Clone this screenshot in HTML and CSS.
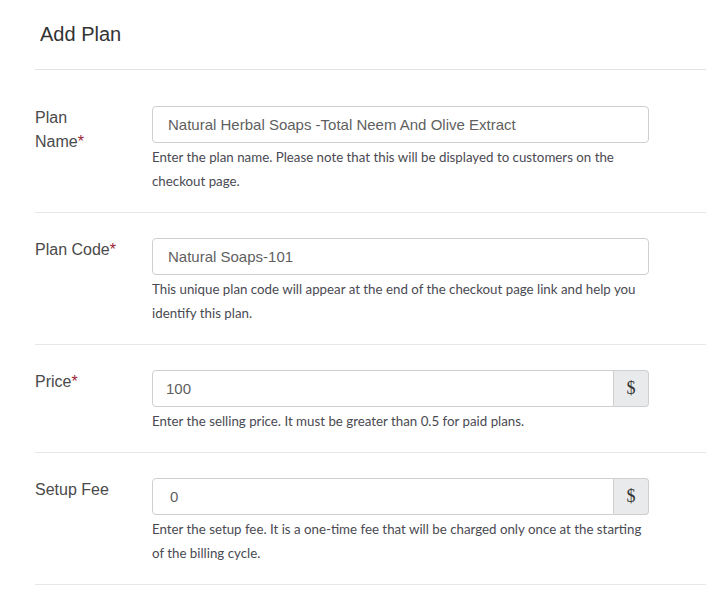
FILE: index.html
```html
<!DOCTYPE html>
<html>
<head>
<meta charset="utf-8">
<link rel="stylesheet" href="styles.css">
</head>
<body>
<div class="panel">
  <div class="header"><h1 class="title">Add Plan</h1></div>
  <div class="row row-first">
    <label class="label">Plan Name<span class="req">*</span></label>
    <div class="field">
      <div class="input"><span class="value">Natural Herbal Soaps -Total Neem And Olive Extract</span></div>
      <p class="help">Enter the plan name. Please note that this will be displayed to customers on the checkout page.</p>
    </div>
  </div>
  <div class="row">
    <label class="label">Plan Code<span class="req">*</span></label>
    <div class="field">
      <div class="input"><span class="value">Natural Soaps-101</span></div>
      <p class="help">This unique plan code will appear at the end of the checkout page link and help you identify this plan.</p>
    </div>
  </div>
  <div class="row">
    <label class="label">Price<span class="req">*</span></label>
    <div class="field">
      <div class="input-group">
        <div class="input grouped"><span class="value">100</span></div>
        <span class="addon">$</span>
      </div>
      <p class="help">Enter the selling price. It must be greater than 0.5 for paid plans.</p>
    </div>
  </div>
  <div class="row">
    <label class="label">Setup Fee</label>
    <div class="field">
      <div class="input-group">
        <div class="input grouped"><span class="value zero">0</span></div>
        <span class="addon">$</span>
      </div>
      <p class="help">Enter the setup fee. It is a one-time fee that will be charged only once at the starting of the billing cycle.</p>
    </div>
  </div>
</div>
</body>
</html>
```
FILE: styles.css
```css
* { box-sizing: border-box; }
body {
  margin: 0;
  background: #fff;
  font-family: "Liberation Sans", Arial, sans-serif;
  color: #444;
}
.panel {
  margin-left: 35px;
  width: 671px;
}
.header {
  height: 70px;
  border-bottom: 1px solid #e3e3e3;
  padding: 22px 0 0 5px;
}
.title {
  margin: 0;
  font-size: 20px;
  line-height: 24px;
  font-weight: normal;
  color: #333;
}
.row {
  display: flex;
  border-bottom: 1px solid #e6e6e6;
  padding: 25px 0 19px;
}
.row-first { padding-top: 36px; }
.label {
  width: 117px;
  flex-shrink: 0;
  padding-right: 32px;
  font-size: 16px;
  line-height: 24px;
  color: #4a4a4a;
}
.req { color: #9b2335; }
.field { width: 497px; }
.input {
  height: 37px;
  border: 1px solid #cfcfcf;
  border-radius: 4px;
  padding: 0 15px;
  display: flex;
  align-items: center;
  font-size: 15px;
  color: #5f5f5f;
}
.value.zero { padding-left: 4px; }
.input-group { display: flex; }
.input.grouped {
  flex: 1;
  padding-left: 13px;
  border-radius: 4px 0 0 4px;
}
.addon {
  width: 35px;
  height: 37px;
  border: 1px solid #cfcfcf;
  border-left: none;
  border-radius: 0 4px 4px 0;
  background: #e9eaeb;
  display: flex;
  align-items: center;
  justify-content: center;
  font-family: "Liberation Serif", "Times New Roman", serif;
  font-size: 18px;
  color: #333;
}
.help {
  margin: 2px 0 0;
  font-family: Lato, "Noto Sans", sans-serif;
  font-size: 13.3px;
  line-height: 24px;
  color: #4a4a52;
}
```
